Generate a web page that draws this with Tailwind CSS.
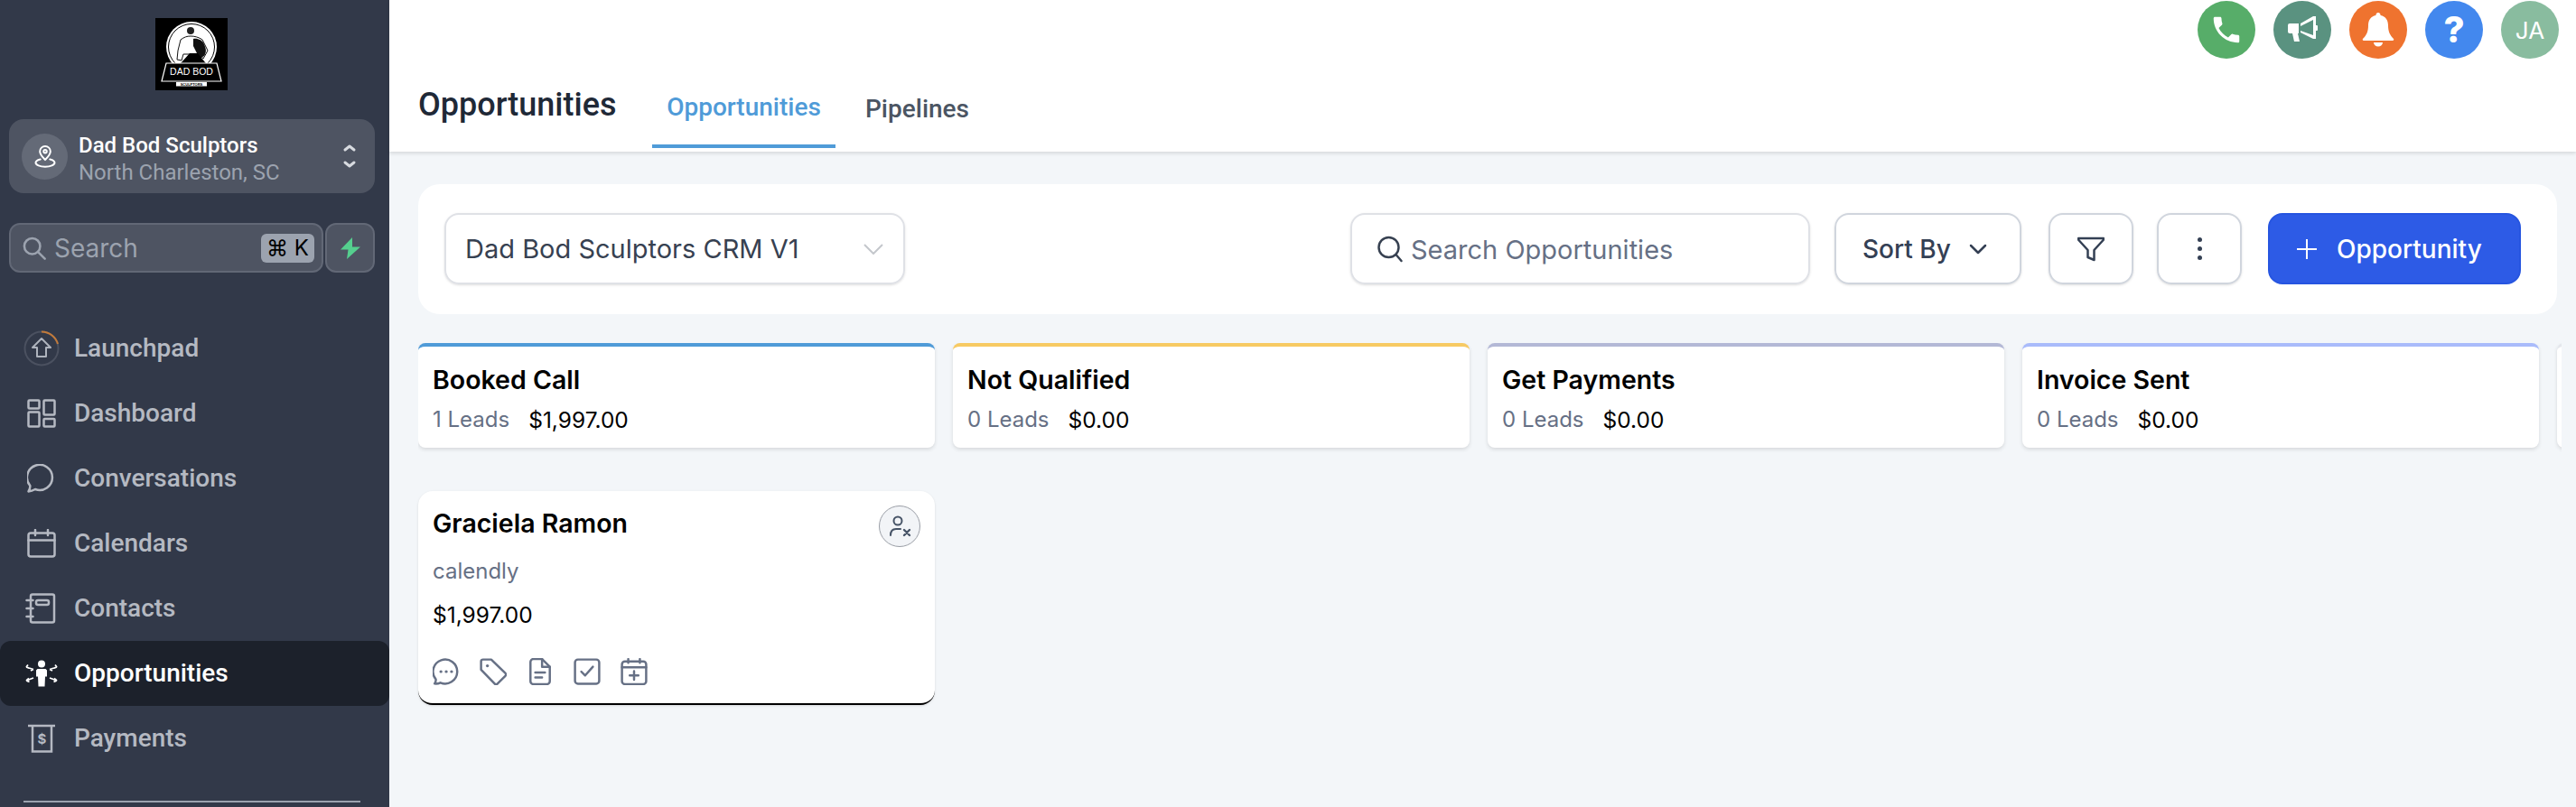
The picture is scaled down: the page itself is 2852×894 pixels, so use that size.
<!DOCTYPE html>
<html lang="en">
<head>
    <meta charset="UTF-8">
    <title>Opportunities</title>
    <script src="https://cdn.jsdelivr.net/npm/@tailwindcss/browser@4"></script>
</head>
<body class="w-[2852px] h-[894px] overflow-hidden flex bg-[#f3f6f9] font-['Inter',sans-serif]">
    <!-- Sidebar -->
    <aside class="w-[431px] h-[894px] shrink-0 bg-[#323949] flex flex-col font-['Roboto',sans-serif]">
        <div class="pt-5 pr-[7px] flex justify-center">
            <svg class="w-20 h-20 bg-black" viewBox="0 0 80 80">
                <circle cx="40" cy="32" r="28" fill="#fff"/>
                <circle cx="40" cy="32" r="25.500" fill="#fff" stroke="#000" stroke-width="1"/>
                <circle cx="39" cy="14" r="4" fill="#222"/>
                <path d="M25 36l3-12c4-3 7-4 11-4s9 1 13 4l6 12-5 9-4-5H31l-2 7-5-1z" fill="#fff" stroke="#111" stroke-width="1"/>
                <path d="M42 23c4-1 10 1 12 6s3 8 0 13l-5 3-3-6-4-8z" fill="#111"/>
                <path d="M29 49l9-10h9l8 10 4 4H24z" fill="#000"/>
                <path d="M12 50h56l5 20H7z" fill="#000" stroke="#fff" stroke-width="1.200"/>
                <text x="40" y="63" text-anchor="middle" font-family="Liberation Sans, sans-serif" font-size="10.500" fill="#fff">DAD BOD</text>
                <rect x="23" y="71" width="34" height="4.500" fill="#fff"/>
                <text x="40" y="75" text-anchor="middle" font-family="Liberation Sans, sans-serif" font-size="4" font-weight="700" fill="#000">SCULPTORS</text>
            </svg>
        </div>

        <div class="mt-8 ml-[10px] mr-4 h-[82px] rounded-2xl bg-[#4e5462] flex items-center pl-[14px] pr-[18px]">
            <div class="w-[51px] h-[51px] rounded-full bg-[#646a77] flex items-center justify-center shrink-0">
                <svg class="w-7 h-7" viewBox="0 0 24 24" fill="none" stroke="#fff" stroke-width="1.700" stroke-linecap="round" stroke-linejoin="round"><path d="M12 15.500c-2.500-2.600-5-5-5-8a5 5 0 0 1 10 0c0 3-2.500 5.400-5 8z"/><circle cx="12" cy="7.500" r="1.500"/><path d="M7.500 15C5 15.600 3 16.800 3 18.300 3 20.300 7 22 12 22s9-1.700 9-3.700c0-1.500-2-2.700-4.500-3.300"/></svg>
            </div>
            <div class="ml-3 mt-[6px] flex-1 leading-none">
                <div class="text-[24px] font-medium text-white leading-[30px]">Dad Bod Sculptors</div>
                <div class="text-[24px] text-[#9ca3af] leading-[30px]">North Charleston, SC</div>
            </div>
            <svg class="w-5 h-8" viewBox="0 0 20 32" fill="none" stroke="#d8dbe0" stroke-width="3" stroke-linecap="round" stroke-linejoin="round"><path d="M5 9l5-4 5 4M5 23l5 4 5-4"/></svg>
        </div>

        <div class="mt-[33px] mx-[10px] flex gap-[2px] h-[55px] w-[405px]">
            <div class="w-[348px] rounded-xl bg-[#4e5462] border-2 border-[#626876] flex items-center pl-3 pr-2">
                <svg class="w-7 h-7 shrink-0" viewBox="0 0 24 24" fill="none" stroke="#9ca3af" stroke-width="2.200" stroke-linecap="round"><circle cx="10" cy="10" r="7.500"/><path d="M15.500 15.500L22 22"/></svg>
                <span class="ml-2 flex-1 text-[28px] text-[#9ca3af] font-['Inter',sans-serif]">Search</span>
                <span class="w-[59px] h-8 rounded-md bg-[#9ca3af] text-black text-[24px] flex items-center justify-center font-['Inter',sans-serif]">⌘ K</span>
            </div>
            <div class="w-[55px] rounded-xl bg-[#4e5462] border-2 border-[#626876] flex items-center justify-center">
                <svg class="w-[26px] h-[26px]" viewBox="0 0 26 26" fill="#55cf8e"><path d="M15 1L2 14.500h8.500L9 25 24 11.500h-9z"/></svg>
            </div>
        </div>

        <nav class="mt-12 flex flex-col text-[28px] font-medium text-[#b5b9c2]">
            <a class="h-[72px] flex items-center pl-[26px]">
                <svg class="w-10 h-10 shrink-0" viewBox="0 0 40 40" fill="none"><circle cx="20" cy="20" r="18.500" stroke="#4b5160" stroke-width="2"/><path d="M20 1.500A18.500 18.500 0 0 1 38 15" stroke="#c27a3a" stroke-width="2"/><path d="M20 9l10 10h-5v10h-10V19h-5z" stroke="#aeb3bd" stroke-width="2" stroke-linejoin="round"/></svg>
                <span class="ml-4">Launchpad</span>
            </a>
            <a class="h-[72px] flex items-center pl-[30px]">
                <svg class="w-8 h-8 shrink-0" viewBox="0 0 32 32" fill="none" stroke="#b5b9c2" stroke-width="2.500"><rect x="1.500" y="1.500" width="12" height="9" rx="1"/><rect x="18.500" y="1.500" width="12" height="16" rx="1"/><rect x="1.500" y="14.500" width="12" height="16" rx="1"/><rect x="18.500" y="22" width="12" height="8.500" rx="1"/></svg>
                <span class="ml-5">Dashboard</span>
            </a>
            <a class="h-[72px] flex items-center pl-[30px]">
                <svg class="w-8 h-8 shrink-0" viewBox="0 0 32 32" fill="none" stroke="#b5b9c2" stroke-width="2.500" stroke-linejoin="round"><path d="M1.500 30.500c1.500-2.500 2-4.500 1.800-6.500A14 14 0 1 1 9 28c-2.500 1.500-5 2.300-7.500 2.500z"/></svg>
                <span class="ml-5">Conversations</span>
            </a>
            <a class="h-[72px] flex items-center pl-[30px]">
                <svg class="w-8 h-8 shrink-0" viewBox="0 0 32 32" fill="none" stroke="#b5b9c2" stroke-width="2.500" stroke-linecap="round"><rect x="1.500" y="4.500" width="29" height="26" rx="2.500"/><path d="M1.500 12.500h29M9 1v6M23 1v6"/></svg>
                <span class="ml-5">Calendars</span>
            </a>
            <a class="h-[72px] flex items-center pl-[28px]">
                <svg class="w-[34px] h-[34px] shrink-0" viewBox="0 0 34 34" fill="none" stroke="#b5b9c2" stroke-width="2.500" stroke-linecap="round"><path d="M6 3.500a2 2 0 0 1 2-2h22a2 2 0 0 1 2 2v27a2 2 0 0 1-2 2H8a2 2 0 0 1-2-2z"/><rect x="12" y="8" width="14" height="5" rx="2"/><path d="M1.500 8h7M1.500 17h7M1.500 26h7"/></svg>
                <span class="ml-5">Contacts</span>
            </a>
            <a class="h-[72px] flex items-center pl-[27px] bg-[#1c212b] rounded-xl text-white">
                <svg class="w-[38px] h-[30px] shrink-0" viewBox="0 0 38 30" fill="#fff"><circle cx="19" cy="4.500" r="4"/><path d="M14.500 10h9l1.500 1.500v7h-2l-.5 11h-7l-.5-11h-2v-7z"/><path d="M2 8l8 2.500M2 8l2-2.500M2 8l3.200 1.200M10 10.500l-3 1.500M36 8l-8 2.500M36 8l-2-2.500M36 8l-3.200 1.200M28 10.500l3 1.500M2 23l8-3M2 23l3-2.500M2 23l3.500 1.300M36 23l-8-3M36 23l-3-2.500M36 23l-3.500 1.300" fill="none" stroke="#fff" stroke-width="1.800"/></svg>
                <span class="ml-[17px]">Opportunities</span>
            </a>
            <a class="h-[72px] flex items-center pl-[30px]">
                <svg class="w-8 h-8 shrink-0" viewBox="0 0 32 32" fill="none" stroke="#b5b9c2" stroke-width="2.500"><path d="M1 2h30M6 2v28.500h21V2"/><text x="16.500" y="22" text-anchor="middle" font-family="Inter, sans-serif" font-size="15" font-weight="700" fill="#b5b9c2" stroke="none">$</text></svg>
                <span class="ml-5">Payments</span>
            </a>
        </nav>
        <div class="mt-[33px] ml-[26px] w-[373px] h-[2px] bg-[#9ca3af]"></div>
    </aside>

    <main class="flex-1 min-w-0">
        <!-- Top header -->
        <header class="h-[168px] bg-white shadow-[0_2px_4px_rgba(0,0,0,0.12)] flex flex-col">
            <div class="h-[66px] pt-px pr-[19px] flex justify-end gap-5">
                <div class="w-16 h-16 rounded-full bg-[#57ad69] flex items-center justify-center">
                    <svg class="w-[38px] h-[38px]" viewBox="0 0 24 24" fill="#fff"><path d="M6.600 10.800c1.400 2.800 3.800 5.100 6.600 6.600l2.200-2.200c.3-.3.700-.4 1-.2 1.100.4 2.300.6 3.600.6.600 0 1 .4 1 1V20c0 .6-.4 1-1 1C10.600 21 3 13.400 3 4c0-.6.400-1 1-1h3.500c.600 0 1 .4 1 1 0 1.300.2 2.500.6 3.600.1.300 0 .7-.2 1z"/></svg>
                </div>
                <div class="w-16 h-16 rounded-full bg-[#5a9280] flex items-center justify-center">
                    <svg class="w-[34px] h-[34px]" viewBox="0 0 34 34" fill="#fff"><path d="M1 12a2 2 0 0 1 2-2h10v11H3a2 2 0 0 1-2-2z"/><path d="M6 21h6l2 9H8z"/><path d="M15 10L29 2h3v25h-3L15 20v-2l14 5V6L15 13z"/><rect x="31" y="12" width="3" height="6" rx="1"/></svg>
                </div>
                <div class="w-16 h-16 rounded-full bg-[#ef732f] flex items-center justify-center">
                    <svg class="w-[36px] h-[40px]" viewBox="0 0 36 40" fill="#fff"><path d="M18 1a2.500 2.500 0 0 1 2.500 3C26.500 5 29 10 29 15c0 7 2 11 6 15 .6.6.2 2-1 2H2c-1.200 0-1.600-1.400-1-2 4-4 6-8 6-15 0-5 2.500-10 8.500-11A2.500 2.500 0 0 1 18 1z"/><path d="M13 34h10a5 4.500 0 0 1-10 0z"/></svg>
                </div>
                <div class="w-16 h-16 rounded-full bg-[#4388ee] flex items-center justify-center text-white text-[40px] font-extrabold leading-none">?</div>
                <div class="w-16 h-16 rounded-full bg-[#89bc9f] flex items-center justify-center text-white text-[26px]">JA</div>
            </div>
            <div class="flex-1 flex items-start pl-8 font-['Roboto',sans-serif]">
                <h1 class="mt-[30px] w-[227px] text-[36px] font-medium text-[#1f2937] leading-10">Opportunities</h1>
                <div class="ml-8 flex gap-4 h-[98px]">
                    <a class="h-[98px] w-[203px] text-center pt-[32px] border-b-4 border-[#4f9bd8] text-[#4f9bd8] text-[28px] font-medium">Opportunities</a>
                    <a class="h-[98px] px-[17px] pt-[34px] text-[#4b5563] text-[28px] font-medium">Pipelines</a>
                </div>
            </div>
        </header>

        <!-- Toolbar -->
        <section class="mt-9 ml-8 w-[2368px] h-[144px] rounded-3xl bg-white flex items-center pl-[29px] pr-10">
            <div class="-mt-px w-[510px] h-[79px] rounded-2xl border-2 border-[#dfe1e6] shadow-sm flex items-center pl-[21px] pr-[22px] justify-between text-[29px] text-[#374151]">
                <span>Dad Bod Sculptors CRM V1</span>
                <svg class="w-[22px] h-3" viewBox="0 0 22 12" fill="none" stroke="#c4c7cc" stroke-width="2"><path d="M1 1l10 10L21 1"/></svg>
            </div>
            <div class="-mt-px ml-[493px] w-[509px] h-[79px] rounded-2xl border-2 border-[#dfe1e6] shadow-sm flex items-center pl-[27px]">
                <svg class="w-[30px] h-[30px]" viewBox="0 0 30 30" fill="none" stroke="#374151" stroke-width="2.500" stroke-linecap="round"><circle cx="13.500" cy="13" r="11"/><path d="M21.500 21l6 7"/></svg>
                <span class="ml-2 mt-[2px] text-[29px] text-[#667085]">Search Opportunities</span>
            </div>
            <div class="-mt-px ml-[27px] w-[207px] h-[79px] rounded-2xl border-2 border-[#d0d5dd] shadow-sm flex items-center pl-[29px] gap-[20px] text-[28px] font-medium text-[#344054]">
                <span>Sort By</span>
                <svg class="w-5 h-3" viewBox="0 0 20 12" fill="none" stroke="#344054" stroke-width="2.500" stroke-linecap="round" stroke-linejoin="round"><path d="M2 2l8 8 8-8"/></svg>
            </div>
            <div class="-mt-px ml-[30px] w-[94px] h-[79px] rounded-2xl border-2 border-[#d0d5dd] shadow-sm flex items-center justify-center">
                <svg class="w-[30px] h-[28px]" viewBox="0 0 30 28" fill="none" stroke="#344054" stroke-width="2.500" stroke-linejoin="round"><path d="M1 2h28v1.500L18.500 15v11l-7-3v-8L1 3.500z"/></svg>
            </div>
            <div class="-mt-px ml-[26px] w-[94px] h-[79px] rounded-2xl border-2 border-[#d0d5dd] shadow-sm flex flex-col items-center justify-center gap-[5px]">
                <span class="w-[5px] h-[5px] rounded-full bg-[#344054]"></span>
                <span class="w-[5px] h-[5px] rounded-full bg-[#344054]"></span>
                <span class="w-[5px] h-[5px] rounded-full bg-[#344054]"></span>
            </div>
            <div class="-mt-px ml-[29px] w-[280px] h-[79px] rounded-2xl bg-[#2d5be6] border-2 border-[#2655e0] flex items-center pl-[30px] text-white text-[28px] font-medium">
                <svg class="w-[22px] h-[22px]" viewBox="0 0 22 22" fill="none" stroke="#fff" stroke-width="2"><path d="M11 0v22M0 11h22"/></svg>
                <span class="ml-[22px]">Opportunity</span>
            </div>
        </section>

        <!-- Pipeline columns -->
        <section class="mt-8 ml-8 w-[2373px] overflow-hidden">
            <div class="flex gap-5 w-[3000px] pb-2">
                <div class="w-[572px] h-[116px] rounded-lg bg-white border-t-4 border-[#4f9bd8] shadow-[0_2px_4px_rgba(0,0,0,0.12)] pl-4 pt-[17px]">
                    <div class="text-[28.500px] font-semibold text-black leading-10">Booked Call</div>
                    <div class="mt-2 flex gap-[21px] text-[24px] leading-8"><span class="text-[#667085]">1 Leads</span><span class="text-black text-[24.500px]">$1,997.00</span></div>
                </div>
                <div class="w-[572px] h-[116px] rounded-lg bg-white border-t-4 border-[#f7ca63] shadow-[0_2px_4px_rgba(0,0,0,0.12)] pl-4 pt-[17px]">
                    <div class="text-[28.500px] font-semibold text-black leading-10">Not Qualified</div>
                    <div class="mt-2 flex gap-[21px] text-[24px] leading-8"><span class="text-[#667085]">0 Leads</span><span class="text-black text-[24.500px]">$0.00</span></div>
                </div>
                <div class="w-[572px] h-[116px] rounded-lg bg-white border-t-4 border-[#b3b8d6] shadow-[0_2px_4px_rgba(0,0,0,0.12)] pl-4 pt-[17px]">
                    <div class="text-[28.500px] font-semibold text-black leading-10">Get Payments</div>
                    <div class="mt-2 flex gap-[21px] text-[24px] leading-8"><span class="text-[#667085]">0 Leads</span><span class="text-black text-[24.500px]">$0.00</span></div>
                </div>
                <div class="w-[572px] h-[116px] rounded-lg bg-white border-t-4 border-[#a9bbfb] shadow-[0_2px_4px_rgba(0,0,0,0.12)] pl-4 pt-[17px]">
                    <div class="text-[28.500px] font-semibold text-black leading-10">Invoice Sent</div>
                    <div class="mt-2 flex gap-[21px] text-[24px] leading-8"><span class="text-[#667085]">0 Leads</span><span class="text-black text-[24.500px]">$0.00</span></div>
                </div>
                <div class="w-[572px] h-[116px] rounded-lg bg-white border-t-4 border-[#e4e7ec] shadow-[0_2px_4px_rgba(0,0,0,0.12)]"></div>
            </div>
        </section>

        <!-- Opportunity card -->
        <article class="mt-10 ml-8 w-[572px] h-[237px] rounded-2xl bg-white border-b-2 border-black shadow-sm pl-4 pr-4">
            <div class="pt-4 flex justify-between">
                <div class="text-[28.500px] font-semibold text-black leading-10">Graciela Ramon</div>
                <div class="w-[46px] h-[46px] rounded-full bg-[#f2f4f7] border border-[#9a9ea6] flex items-center justify-center">
                    <svg class="w-[26px] h-[26px]" viewBox="0 0 26 26" fill="none" stroke="#475467" stroke-width="2" stroke-linecap="round"><circle cx="11" cy="7" r="4.500"/><path d="M3 23c0-4 2-7 6-7h5"/><path d="M18 17l6 6M24 17l-6 6" stroke-width="2.400"/></svg>
                </div>
            </div>
            <div class="mt-[11px] text-[24px] text-[#667085] leading-8">calendly</div>
            <div class="mt-4 text-[24.500px] text-black leading-8">$1,997.00</div>
            <div class="mt-8 flex gap-[22px]">
                <svg class="w-[30px] h-[30px]" viewBox="0 0 28 28" fill="none" stroke="#667085" stroke-width="2.300" stroke-linejoin="round"><path d="M2 26.500c1-1.500 1.500-3 1.300-4.500A12.500 12.500 0 1 1 8 25.500c-2 1-4 1.200-6 1z"/><path d="M8.500 14h.1M14 14h.1M19.500 14h.1" stroke-width="3" stroke-linecap="round"/></svg>
                <svg class="w-[30px] h-[30px]" viewBox="0 0 28 28" fill="none" stroke="#667085" stroke-width="2.300" stroke-linejoin="round"><path d="M1.500 3.500a2 2 0 0 1 2-2H12l14.500 14a2 2 0 0 1 0 3l-8 8a2 2 0 0 1-3 0L1.500 12z"/><path d="M8 8h.1" stroke-width="3" stroke-linecap="round"/></svg>
                <svg class="w-[30px] h-[30px]" viewBox="0 0 28 28" fill="none" stroke="#667085" stroke-width="2.300" stroke-linecap="round" stroke-linejoin="round"><path d="M4 4a3 3 0 0 1 3-3h9l8 8v15a3 3 0 0 1-3 3H7a3 3 0 0 1-3-3z"/><path d="M16 1v8h8M9 15h10M9 20h7"/></svg>
                <svg class="w-[30px] h-[30px]" viewBox="0 0 28 28" fill="none" stroke="#667085" stroke-width="2.300" stroke-linecap="round" stroke-linejoin="round"><rect x="1.500" y="1.500" width="25" height="25" rx="3"/><path d="M8 14l4 4 8-9"/></svg>
                <svg class="w-[30px] h-[30px]" viewBox="0 0 28 28" fill="none" stroke="#667085" stroke-width="2.300" stroke-linecap="round"><rect x="1.500" y="3.500" width="25" height="23.500" rx="3"/><path d="M1.500 9.500h25M8 1v4M20 1v4M14 13.500v9M9.500 18h9"/></svg>
            </div>
        </article>
    </main>
</body>
</html>
